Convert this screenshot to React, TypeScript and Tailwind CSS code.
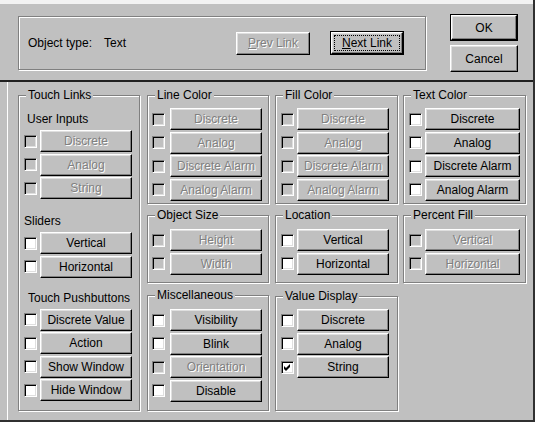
import type { ReactNode } from 'react';

type Item = { label: string; off?: boolean; checked?: boolean };

const raised =
  'bg-[#c0c0c0] border border-t-white border-l-white border-r-black border-b-black shadow-[inset_-1px_-1px_0_#808080,inset_1px_1px_0_#dfdfdf]';

function Check({ off, checked }: { off?: boolean; checked?: boolean }) {
  return (
    <div
      className={`flex items-center justify-center w-[13px] h-[13px] shrink-0 border border-t-[#808080] border-l-[#808080] border-r-white border-b-white shadow-[inset_1px_1px_0_#000,inset_-1px_-1px_0_#dfdfdf] ${
        off ? 'bg-[#c0c0c0]' : 'bg-white'
      }`}
    >
      {checked && (
        <svg width="7" height="7" viewBox="0 0 7 7">
          <polygon points="0,2 2,4 6,0 6,3 2,7 0,5" fill="#000" />
        </svg>
      )}
    </div>
  );
}

function Button({ label, off, w }: { label: string; off?: boolean; w: string }) {
  return (
    <div className={`flex items-center justify-center h-[22px] ${w} ${raised}`}>
      <span
        className={
          off ? 'text-[#808080] [text-shadow:1px_1px_0_#fff]' : 'text-black'
        }
      >
        {label}
      </span>
    </div>
  );
}

function Rows({ items, pad, gap, w }: { items: Item[]; pad: string; gap: string; w: string }) {
  return (
    <div className="flex flex-col gap-[1.5px]">
      {items.map((it) => (
        <div key={it.label} className={`flex items-center h-[22px] ${pad} ${gap}`}>
          <Check off={it.off} checked={it.checked} />
          <Button label={it.label} off={it.off} w={w} />
        </div>
      ))}
    </div>
  );
}

function Group({ title, className, children }: { title: string; className: string; children: ReactNode }) {
  return (
    <div
      className={`relative border border-[#808080] shadow-[inset_1px_1px_0_#fff,1px_1px_0_#fff] ${className}`}
    >
      <span className="absolute left-[7px] -top-[8px] px-[2px] bg-[#c0c0c0] leading-[14px]">
        {title}
      </span>
      {children}
    </div>
  );
}

const colorItems = (off: boolean): Item[] => [
  { label: 'Discrete', off },
  { label: 'Analog', off },
  { label: 'Discrete Alarm', off },
  { label: 'Analog Alarm', off },
];

export default function App() {
  return (
    <div className="w-[539px] h-[429px] bg-white font-['Liberation_Sans',Arial,sans-serif] text-[12px] text-black">
      <div className="flex flex-col w-[535px] h-[422px] bg-[#c0c0c0] border-r-2 border-b-2 border-[#303030]">
        <div className="h-[4px] bg-[#f2f2f2]" />

        {/* header */}
        <div className="flex h-[76px] pl-[18px]">
          <div className="flex items-center mt-[12px] w-[408px] h-[54px] pl-[9px] pr-[21px] border border-[#808080] shadow-[inset_1px_1px_0_#fff,1px_1px_0_#fff]">
            <span>Object type:</span>
            <span className="ml-[12px]">Text</span>
            <div className={`ml-auto flex items-center justify-center w-[74px] h-[23px] ${raised}`}>
              <span className="text-[#808080] [text-shadow:1px_1px_0_#fff]">
                <u>P</u>rev Link
              </span>
            </div>
            <div className="ml-[20px] w-[74px] h-[24px] border border-black">
              <div className={`flex w-full h-full p-[2px] ${raised}`}>
                <span className="flex flex-1 items-center justify-center border border-dotted border-black">
                  <span>
                    <u>N</u>ext Link
                  </span>
                </span>
              </div>
            </div>
          </div>
          <div className="flex flex-col ml-[24px] mt-[10px]">
            <div className="w-[68px] h-[27px] border border-black">
              <div className={`flex items-center justify-center w-full h-full ${raised}`}>OK</div>
            </div>
            <div className={`flex items-center justify-center mt-[4px] w-[68px] h-[27px] ${raised}`}>
              Cancel
            </div>
          </div>
        </div>

        <div className="h-[2px] bg-[#202020]" />

        {/* lower panel */}
        <div className="flex flex-1 ml-[7px] pl-[10px] pt-[13px] border-l border-white">
          {/* column 1 */}
          <Group title="Touch Links" className="w-[122px] h-[316px]">
            <div className="pl-[8px] pt-[16px] leading-[14px]">User Inputs</div>
            <div className="mt-[4px]">
              <Rows
                pad="pl-[5px]"
                gap="gap-[3px]"
                w="w-[92px]"
                items={[
                  { label: 'Discrete', off: true },
                  { label: 'Analog', off: true },
                  { label: 'String', off: true },
                ]}
              />
            </div>
            <div className="pl-[5px] mt-[15px] leading-[14px]">Sliders</div>
            <div className="mt-[4px]">
              <Rows
                pad="pl-[5px]"
                gap="gap-[3px]"
                w="w-[92px]"
                items={[{ label: 'Vertical' }, { label: 'Horizontal' }]}
              />
            </div>
            <div className="pl-[9px] mt-[13px] leading-[14px]">Touch Pushbuttons</div>
            <div className="mt-[4px]">
              <Rows
                pad="pl-[5px]"
                gap="gap-[3px]"
                w="w-[92px]"
                items={[
                  { label: 'Discrete Value' },
                  { label: 'Action' },
                  { label: 'Show Window' },
                  { label: 'Hide Window' },
                ]}
              />
            </div>
          </Group>

          {/* column 2 */}
          <div className="flex flex-col ml-[7px] w-[122px]">
            <Group title="Line Color" className="h-[109px] pt-[12px]">
              <Rows pad="pl-[4px]" gap="gap-[5px]" w="w-[92px]" items={colorItems(true)} />
            </Group>
            <Group title="Object Size" className="mt-[11px] h-[68px] pt-[13px]">
              <Rows
                pad="pl-[4px]"
                gap="gap-[5px]"
                w="w-[92px]"
                items={[
                  { label: 'Height', off: true },
                  { label: 'Width', off: true },
                ]}
              />
            </Group>
            <Group title="Miscellaneous" className="mt-[12px] h-[116px] pt-[13px]">
              <Rows
                pad="pl-[4px]"
                gap="gap-[5px]"
                w="w-[92px]"
                items={[
                  { label: 'Visibility' },
                  { label: 'Blink' },
                  { label: 'Orientation', off: true },
                  { label: 'Disable' },
                ]}
              />
            </Group>
          </div>

          {/* column 3 */}
          <div className="flex flex-col ml-[6px] w-[123px]">
            <Group title="Fill Color" className="h-[109px] pt-[12px]">
              <Rows pad="pl-[5px]" gap="gap-[3px]" w="w-[92px]" items={colorItems(true)} />
            </Group>
            <Group title="Location" className="mt-[11px] h-[68px] pt-[13px]">
              <Rows
                pad="pl-[5px]"
                gap="gap-[3px]"
                w="w-[92px]"
                items={[{ label: 'Vertical' }, { label: 'Horizontal' }]}
              />
            </Group>
            <Group title="Value Display" className="mt-[13px] h-[115px] pt-[12px]">
              <Rows
                pad="pl-[5px]"
                gap="gap-[3px]"
                w="w-[92px]"
                items={[
                  { label: 'Discrete' },
                  { label: 'Analog' },
                  { label: 'String', checked: true },
                ]}
              />
            </Group>
          </div>

          {/* column 4 */}
          <div className="flex flex-col ml-[5px] w-[123px]">
            <Group title="Text Color" className="h-[109px] pt-[12px]">
              <Rows pad="pl-[5px]" gap="gap-[3px]" w="w-[95px]" items={colorItems(false)} />
            </Group>
            <Group title="Percent Fill" className="mt-[11px] h-[68px] pt-[13px]">
              <Rows
                pad="pl-[5px]"
                gap="gap-[3px]"
                w="w-[95px]"
                items={[
                  { label: 'Vertical', off: true },
                  { label: 'Horizontal', off: true },
                ]}
              />
            </Group>
          </div>
        </div>
      </div>
    </div>
  );
}
